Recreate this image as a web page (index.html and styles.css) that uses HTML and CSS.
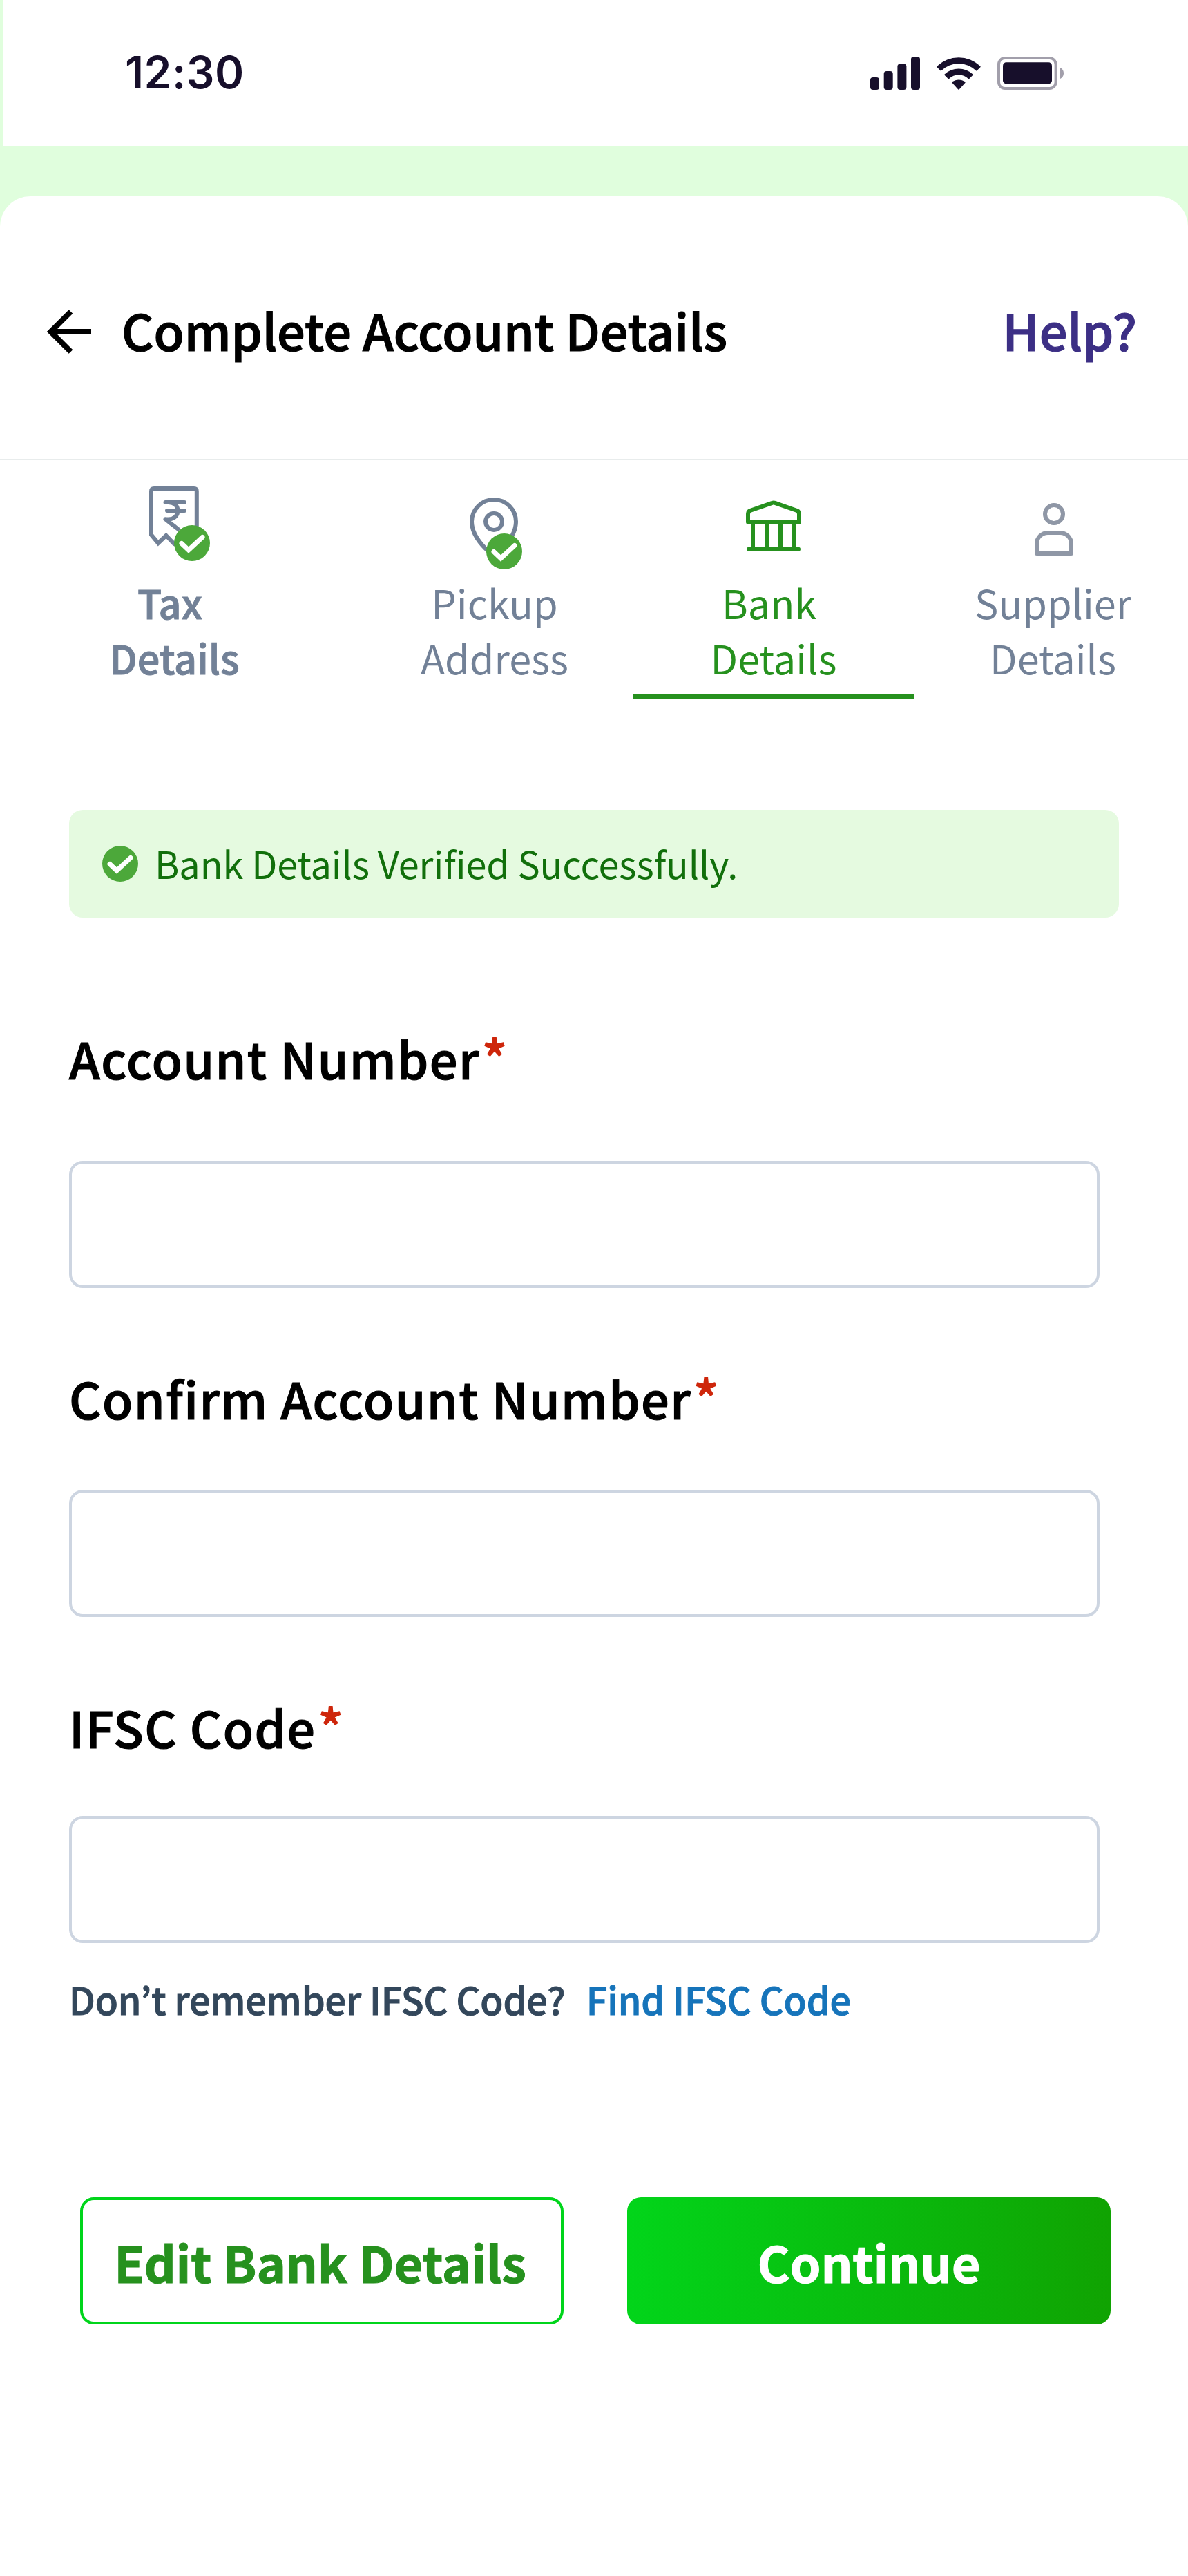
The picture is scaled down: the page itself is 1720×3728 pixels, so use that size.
FILE: index.html
```html
<!DOCTYPE html>
<html lang="en">
<head>
<meta charset="utf-8">
<title>Complete Account Details</title>
<link rel="stylesheet" href="styles.css">
</head>
<body>
<div class="status-bar">
  <span class="time">12:30</span>
  <svg class="status-icons" width="280" height="48" viewBox="0 0 280 48">
    <g fill="#170f2b">
      <rect x="0" y="30" width="13" height="18" rx="4"/>
      <rect x="19.7" y="21" width="13" height="27" rx="4"/>
      <rect x="39.4" y="10.5" width="13" height="37.5" rx="4"/>
      <rect x="59" y="0" width="13" height="48" rx="4"/>
      <path d="M96.6 15.2Q96 14.5 96.7 13.800A45.500 45.500 0 0 1 159.300 13.800Q160 14.500 159.400 15.200L154.400 20.200Q153.700 20.900 153 20.200A36 36 0 0 0 103 20.200Q102.300 20.900 101.600 20.200Z"/>
      <path d="M107.500 26.800Q106.900 26.100 107.600 25.400A30 30 0 0 1 148.400 25.400Q149.100 26.100 148.500 26.800L143.300 32Q142.600 32.700 141.900 32A20.500 20.500 0 0 0 114.100 32Q113.400 32.700 112.700 32Z"/>
      <path d="M118.700 38Q118.100 37.300 118.800 36.700A14.500 14.500 0 0 1 137.200 36.700Q137.900 37.300 137.300 38L128.700 47.500Q128 48.200 127.300 47.500Z"/>
      <rect x="192" y="8.300" width="71" height="31.200" rx="5"/>
    </g>
    <rect x="186" y="2" width="82.600" height="44" rx="9" fill="none" stroke="#a29fab" stroke-width="4"/>
    <path d="M275 16C281.700 19 281.700 29 275 32Z" fill="#a29fab"/>
  </svg>
</div>
<main class="sheet">
  <header class="header">
    <svg class="back" width="64" height="64" viewBox="0 0 64 64" fill="none" stroke="#000" stroke-width="8"><path d="M64 32H6M34.500 3L5.500 32L34.500 61"/></svg>
    <h1 class="title">Complete Account Details</h1>
    <a class="help">Help?</a>
  </header>
  <nav class="tabs">
    <div class="tab tab-tax">
      <svg class="tab-icon" width="100" height="165" viewBox="204 666 100 165" fill="none" stroke="#728197" stroke-width="6" stroke-linejoin="miter" stroke-linecap="round">
        <path d="M284.800 775V711Q284.800 707 280.800 707H223Q219 707 219 711V774L229 786L240.500 775L252 787"/>
        <path d="M239.500 727H267M242 739H267M239.500 751.500H244C252 751.500 257.500 746 257.500 739S252 727 244 727M239.500 751.500L257.500 765.500" stroke-linejoin="round"/>
        <circle cx="278" cy="786" r="26" fill="#4ca83a" stroke="none"/>
        <path d="M263 786.500L273 796L293 777.500" stroke="#fff" stroke-width="7"/>
      </svg>
      <span class="tab-label">Tax&nbsp;<br>Details</span>
    </div>
    <div class="tab tab-pickup">
      <svg class="tab-icon" width="100" height="165" viewBox="666 666 100 165" fill="none" stroke="#728197" stroke-width="6" stroke-linecap="round">
        <path d="M715 805C703 795 683 777 683 755A32 32 0 0 1 747 755C747 777 727 795 715 805Z"/>
        <circle cx="715" cy="755" r="12"/>
        <circle cx="730" cy="798" r="26" fill="#4ca83a" stroke="none"/>
        <path d="M715 798.500L725 808L745 789.500" stroke="#fff" stroke-width="7"/>
      </svg>
      <span class="tab-label">Pickup<br>Address</span>
    </div>
    <div class="tab tab-bank">
      <svg class="tab-icon" width="100" height="165" viewBox="1070 666 100 165" fill="none" stroke="#26911e" stroke-width="6" stroke-linejoin="round" stroke-linecap="round">
        <path d="M1083 755.500V744Q1083 740.500 1086 739L1118 727.800Q1120 727 1122 727.800L1154 739Q1157 740.500 1157 744V755.500Z"/>
        <path d="M1090 757V793M1110 757V793M1130 757V793M1150 757V793M1084 794.700H1156"/>
      </svg>
      <span class="tab-label">Bank&nbsp;<br>Details</span>
    </div>
    <div class="tab tab-supplier">
      <svg class="tab-icon" width="100" height="165" viewBox="1476 666 100 165" fill="none" stroke="#8f97a6" stroke-width="6" stroke-linejoin="round">
        <circle cx="1526" cy="744" r="13"/>
        <path d="M1501 801V787A16 16 0 0 1 1517 771H1535A16 16 0 0 1 1551 787V801Z"/>
      </svg>
      <span class="tab-label">Supplier<br>Details</span>
    </div>
  </nav>
  <div class="alert">
    <svg width="52" height="52" viewBox="0 0 52 52"><circle cx="26" cy="26" r="26" fill="#4ca83a"/><path d="M11 26.500L21 36L41 17.500" fill="none" stroke="#fff" stroke-width="7" stroke-linecap="round"/></svg>
    <span>Bank Details Verified Successfully.</span>
  </div>
  <form class="form">
    <label class="field field-account"><span class="label">Account Number<i class="star">*</i></span><input class="input"></label>
    <label class="field field-confirm"><span class="label">Confirm Account Number<i class="star">*</i></span><input class="input"></label>
    <label class="field field-ifsc"><span class="label">IFSC Code<i class="star">*</i></span><input class="input"></label>
    <p class="hint"><span>Don’t remember IFSC Code?</span><a class="link">Find IFSC Code</a></p>
    <div class="actions">
      <button type="button" class="btn btn-outline">Edit Bank Details</button>
      <button type="button" class="btn btn-primary">Continue</button>
    </div>
  </form>
</main>
</body>
</html>
```
FILE: styles.css
```css
* { box-sizing: border-box; }
body {
  margin: 0;
  background: #e0fedd;
  color: #000;
  font-family: "Noto Sans CJK KR", "Noto Sans", sans-serif;
  font-weight: 500;
}
.status-bar {
  display: flex;
  justify-content: space-between;
  align-items: flex-start;
  height: 212px;
  margin: 0 0 72px 4px;
  padding: 66px 180px 0 177px;
  background: #fff;
}
.time {
  font: 600 64px/77px Inter, sans-serif;
  letter-spacing: .5px;
  color: #170f2b;
}
.status-icons { margin-top: 16px; }
.sheet {
  min-height: 3444px;
  background: #fff;
  border-radius: 44px 44px 0 0;
}
.header {
  display: flex;
  align-items: flex-start;
  height: 382px;
  padding: 140px 74px 0 68px;
  border-bottom: 2px solid #e8ecec;
  font-size: 72px;
  line-height: 105px;
  letter-spacing: -.08px;
  -webkit-text-stroke: 1.2px currentColor;
}
.back { margin: 24px 44px 0 0; }
.title { margin: 0; font: inherit; }
.help { margin-left: auto; color: #3c2f85; }
.tabs {
  display: flex;
  height: 346px;
  overflow: hidden;
  font-size: 57.6px;
  font-weight: 400;
  line-height: 80px;
  color: #728197;
}
.tab {
  display: flex;
  flex-direction: column;
  align-items: center;
  flex: none;
  text-align: center;
}
.tab-icon { display: block; flex: none; }
.tab-label { white-space: nowrap; }
.tab-tax { width: 508px; font-weight: 500; }
.tab-tax .tab-label {
  padding-right: 3px;
  -webkit-text-stroke: 1px currentColor;
}
.tab-pickup { width: 400px; margin-left: 8px; }
.tab-bank { width: 408px; color: #26911e; }
.tab-bank::after {
  content: "";
  width: 408px;
  height: 8px;
  margin-top: 13px;
  border-radius: 4px;
  flex: none;
  background: #26911e;
}
.tab-supplier { width: 404px; }
.tab-supplier .tab-label { padding-right: 3px; }
.alert {
  display: flex;
  align-items: center;
  gap: 24px;
  width: 1520px;
  height: 156px;
  margin: 160px 0 0 100px;
  padding: 0 48px;
  border-radius: 20px;
  background: #e5fae0;
  color: #116f0b;
  font-size: 54px;
  font-weight: 400;
  line-height: 79px;
  letter-spacing: -.11px;
}
.alert span { padding-bottom: 3px; }
.form { padding: 0 100px; }
.field { display: flex; flex-direction: column; }
.field-account { margin-top: 153px; gap: 99px; }
.field-confirm { margin-top: 109px; gap: 83px; }
.field-ifsc { margin-top: 109px; gap: 79px; }
.label {
  height: 100px;
  font-size: 72px;
  line-height: 100px;
  letter-spacing: 1.42px;
  -webkit-text-stroke: 1.2px currentColor;
}
.star {
  margin-left: 3px;
  color: #ce260b;
  font-style: normal;
  font-weight: 700;
  line-height: 0;
  vertical-align: 3px;
  -webkit-text-stroke: 0;
}
.input {
  width: 1492px;
  height: 184px;
  padding: 0 32px;
  border: 4px solid #cdd5e1;
  border-radius: 20px;
  background: #fff;
  font: inherit;
}
.hint {
  display: flex;
  gap: 30px;
  margin: 41px 0 0;
  font-size: 54px;
  line-height: 79px;
  letter-spacing: -.08px;
  color: #33475b;
  -webkit-text-stroke: 1px currentColor;
}
.link { color: #1674ba; }
.actions {
  display: flex;
  gap: 92px;
  margin-top: 248px;
  padding-left: 16px;
}
.btn {
  width: 700px;
  height: 184px;
  padding: 1px 0 0;
  border: 4px solid #00d51b;
  border-radius: 20px;
  font: 700 72px/105px "Noto Sans CJK KR", "Noto Sans", sans-serif;
  letter-spacing: -.18px;
  -webkit-text-stroke: 1px currentColor;
}
.btn-outline { padding-right: 5px; background: #fff; color: #26911e; }
.btn-primary {
  border: 0;
  background: linear-gradient(90deg, #02d51a, #10a302);
  color: #fff;
}
```
